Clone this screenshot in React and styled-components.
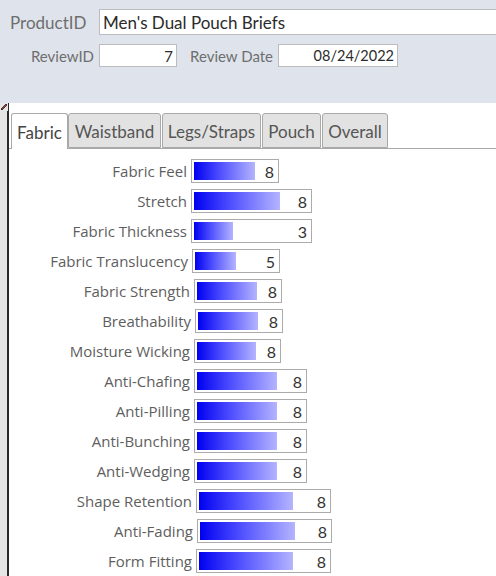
import React from "react";
import styled, { createGlobalStyle } from "styled-components";

const GlobalStyle = createGlobalStyle`
  html, body {
    margin: 0;
    padding: 0;
    background: #ffffff;
    font-family: "Lato", "Open Sans", sans-serif;
  }
`;

const Page = styled.div`
  width: 496px;
  height: 576px;
  overflow: hidden;
  display: flex;
  flex-direction: column;
`;

const Header = styled.div`
  height: 103px;
  flex-shrink: 0;
  background: #dfe4ec;
  padding: 9px 0 0 10px;
  box-sizing: border-box;
  overflow: hidden;
`;

const HeaderRow = styled.div`
  display: flex;
  align-items: center;
  margin-top: ${(p) => p.$top || 0}px;
`;

const HeadLabel = styled.div`
  width: ${(p) => p.$w}px;
  flex-shrink: 0;
  margin-left: ${(p) => p.$ml || 0}px;
  text-align: ${(p) => (p.$right ? "right" : "left")};
  padding-right: ${(p) => (p.$right ? 5 : 0)}px;
  box-sizing: border-box;
  font-size: ${(p) => p.$size || 15}px;
  color: #6e6e6e;
  white-space: nowrap;
`;

const Field = styled.div`
  width: ${(p) => p.$w}px;
  height: ${(p) => p.$h}px;
  flex-shrink: 0;
  background: #ffffff;
  border: 1px solid #bcbcbc;
  box-sizing: border-box;
  display: flex;
  align-items: center;
  justify-content: ${(p) => (p.$right ? "flex-end" : "flex-start")};
  padding: 0 3px 0 3px;
  font-size: ${(p) => p.$size || 15}px;
  color: #2b2b2b;
  white-space: nowrap;
`;

const Main = styled.div`
  flex: 1;
  display: flex;
`;

const Selector = styled.div`
  width: 7px;
  flex-shrink: 0;
  background: #e6e6e6;
  border-right: 2px solid #2a2a2a;
  position: relative;
`;

const Pencil = styled.svg`
  position: absolute;
  top: 0;
  left: 0;
`;

const Content = styled.div`
  flex: 1;
  padding-top: 10px;
`;

const TabStrip = styled.div`
  display: flex;
  align-items: flex-end;
  padding-left: 2px;
  border-bottom: 1px solid #a9a9a9;
  height: 35px;
`;

const Tab = styled.div`
  width: ${(p) => p.$w}px;
  flex-shrink: 0;
  box-sizing: border-box;
  margin-right: ${(p) => (p.$active ? 0 : 1)}px;
  margin-bottom: ${(p) => (p.$active ? -1 : 0)}px;
  height: ${(p) => (p.$active ? 36 : 35)}px;
  border: 1px solid #a9a9a9;
  border-bottom: ${(p) => (p.$active ? "none" : "1px solid #a9a9a9")};
  border-radius: 3px 3px 0 0;
  background: ${(p) => (p.$active ? "#ffffff" : "#e2e2e2")};
  display: flex;
  align-items: center;
  justify-content: center;
  font-size: 17px;
  color: ${(p) => (p.$active ? "#444444" : "#555555")};
  padding-top: 1px;
  white-space: nowrap;
`;

const Rows = styled.div`
  padding-top: 7px;
`;

const Row = styled.div`
  display: flex;
  align-items: center;
  height: 30px;
  margin-left: ${(p) => p.$indent}px;
`;

const Label = styled.div`
  width: 178px;
  margin-right: 4px;
  text-align: right;
  font-family: "Open Sans", "Lato", sans-serif;
  font-size: 15px;
  color: #5e5e5e;
  white-space: nowrap;
`;

const Meter = styled.div`
  width: ${(p) => p.$w}px;
  height: 24px;
  box-sizing: border-box;
  border: 1px solid #ababab;
  background: #ffffff;
  padding: 2px;
  position: relative;
  display: flex;
  align-items: stretch;
`;

const Bar = styled.div`
  background: linear-gradient(to right, #0000f0 0%, #4a4aff 40%, #b4b4ff 100%);
`;

const Score = styled.span`
  position: absolute;
  right: 4px;
  top: 50%;
  transform: translateY(-50%);
  font-size: 16px;
  color: #333333;
`;

const tabs = [
  { name: "Fabric", w: 57, active: true },
  { name: "Waistband", w: 93 },
  { name: "Legs/Straps", w: 99 },
  { name: "Pouch", w: 59 },
  { name: "Overall", w: 66 },
];

const ratings = [
  { label: "Fabric Feel", value: 8, indent: 0, w: 88, bar: 61 },
  { label: "Stretch", value: 8, indent: 0, w: 121, bar: 86 },
  { label: "Fabric Thickness", value: 3, indent: 0, w: 121, bar: 39 },
  { label: "Fabric Translucency", value: 5, indent: 1, w: 88, bar: 41 },
  { label: "Fabric Strength", value: 8, indent: 3, w: 88, bar: 60 },
  { label: "Breathability", value: 8, indent: 4, w: 88, bar: 60 },
  { label: "Moisture Wicking", value: 8, indent: 3, w: 87, bar: 59 },
  { label: "Anti-Chafing", value: 8, indent: 3, w: 113, bar: 80 },
  { label: "Anti-Pilling", value: 8, indent: 3, w: 113, bar: 80 },
  { label: "Anti-Bunching", value: 8, indent: 3, w: 113, bar: 80 },
  { label: "Anti-Wedging", value: 8, indent: 3, w: 113, bar: 80 },
  { label: "Shape Retention", value: 8, indent: 5, w: 135, bar: 94 },
  { label: "Anti-Fading", value: 8, indent: 6, w: 135, bar: 95 },
  { label: "Form Fitting", value: 8, indent: 5, w: 135, bar: 94 },
];

export default function App() {
  return (
    <Page>
      <GlobalStyle />
      <Header>
        <HeaderRow>
          <HeadLabel $w={89} $size={17}>ProductID</HeadLabel>
          <Field $w={420} $h={26} $size={17}>Men's Dual Pouch Briefs</Field>
        </HeaderRow>
        <HeaderRow $top={9}>
          <HeadLabel $w={89} $right>ReviewID</HeadLabel>
          <Field $w={78} $h={23} $right>7</Field>
          <HeadLabel $w={88} $ml={13}>Review Date</HeadLabel>
          <Field $w={120} $h={23} $size={14.5} $right>08/24/2022</Field>
        </HeaderRow>
      </Header>
      <Main>
        <Selector>
          <Pencil width="8" height="8" viewBox="0 0 8 8">
            <rect x="0" y="0" width="8" height="8" fill="#e6e6e6" />
            <path d="M1 6 L6 1 L7 2 L2 7 Z" fill="#b33a2a" stroke="#222" strokeWidth="0.8" />
            <path d="M1 6 L1 7 L2 7" fill="#222" />
          </Pencil>
        </Selector>
        <Content>
          <TabStrip>
            {tabs.map((t) => (
              <Tab key={t.name} $w={t.w} $active={t.active}>
                {t.name}
              </Tab>
            ))}
          </TabStrip>
          <Rows>
            {ratings.map((r) => (
              <Row key={r.label} $indent={r.indent}>
                <Label>{r.label}</Label>
                <Meter $w={r.w}>
                  <Bar style={{ width: r.bar }} />
                  <Score>{r.value}</Score>
                </Meter>
              </Row>
            ))}
          </Rows>
        </Content>
      </Main>
    </Page>
  );
}
